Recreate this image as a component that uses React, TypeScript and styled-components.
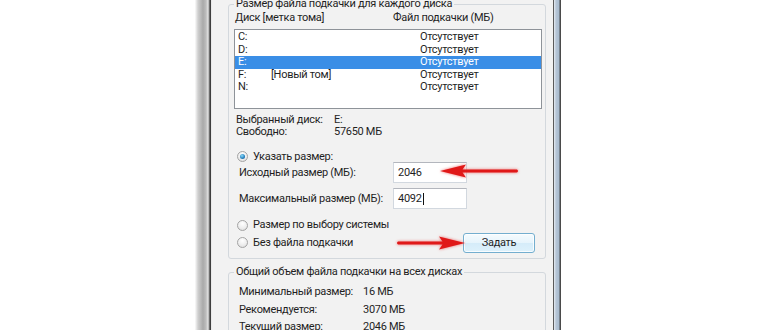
import { Fragment } from "react";
import styled, { createGlobalStyle } from "styled-components";

const GlobalStyle = createGlobalStyle`
  html, body {
    margin: 0;
    padding: 0;
    background: #fff;
  }
  body {
    font-family: Roboto, "Noto Sans", "DejaVu Sans", sans-serif;
    font-size: 11px;
    letter-spacing: -0.3px;
    color: #1f1f1f;
    white-space: nowrap;
  }
`;

const Page = styled.div`
  position: relative;
  width: 770px;
  height: 330px;
  overflow: hidden;
  padding-left: 195px;
  box-sizing: border-box;
`;

const Window = styled.div`
  display: flex;
  width: 366px;
  height: 330px;
`;

const LeftFrame = styled.div`
  width: 17px;
  flex: none;
  background: linear-gradient(
    to right,
    #fbfbfb 0,
    #cfcfcf 3px,
    #a9a9a9 8px,
    #bdbdbd 11px,
    #e2e2e2 13px,
    #9a9a9a 14px,
    #3e3e3e 15px,
    #3e3e3e 16px,
    #e9e9e9 16px
  );
`;

const RightFrame = styled.div`
  width: 8px;
  flex: none;
  background: linear-gradient(
    to right,
    #5a5a5a 0,
    #5a5a5a 1px,
    #e6ecf2 1px,
    #b7c6d6 3px,
    #a9bccf 6px,
    #4a4a4a 7px,
    #4a4a4a 8px
  );
`;

const Client = styled.div`
  flex: 1;
  background: #f2f2f2;
  padding: 0 7px 0 16px;
  display: flex;
  flex-direction: column;
`;

const GroupBox = styled.div<{ $top: number }>`
  margin-top: ${(p) => p.$top}px;
  border: 1px solid #d3d8dd;
  border-radius: 3px;
  padding: 0 3px 5px 5px;
  display: flex;
  flex-direction: column;
`;

const Legend = styled.div`
  align-self: flex-start;
  height: 14px;
  line-height: 14px;
  margin-top: -8px;
  padding: 0 2px;
  background: #f2f2f2;
`;

const ColumnHeader = styled.div`
  display: grid;
  grid-template-columns: 158px 1fr;
  height: 14px;
  line-height: 14px;
  padding-left: 1px;
`;

const DriveList = styled.div`
  margin-top: 4px;
  height: 80px;
  box-sizing: border-box;
  border: 1px solid #8e9399;
  background: #fff;
  padding-top: 1px;
`;

const DriveRow = styled.div<{ $selected?: boolean }>`
  display: grid;
  grid-template-columns: 33px 149px 1fr;
  height: 12.5px;
  line-height: 12.5px;
  padding-left: 3px;
  background: ${(p) => (p.$selected ? "#3a8ee6" : "transparent")};
  color: ${(p) => (p.$selected ? "#fff" : "inherit")};
`;

const InfoGrid = styled.div`
  display: grid;
  grid-template-columns: 98px 1fr;
  margin: 5px 0 0 2px;
  line-height: 12px;
`;

const OptionRow = styled.div<{ $top: number; $height: number }>`
  display: flex;
  align-items: center;
  gap: 5px;
  margin: ${(p) => p.$top}px 0 0 3px;
  height: ${(p) => p.$height}px;
  line-height: 14px;
`;

const Radio = styled.span<{ $checked?: boolean }>`
  position: relative;
  width: 11px;
  height: 11px;
  flex: none;
  box-sizing: border-box;
  border-radius: 50%;
  border: 1px solid #a4a4a4;
  background: radial-gradient(circle at 50% 30%, #ffffff 0, #ececec 60%, #d6d6d6 100%);

  &::after {
    content: "";
    display: ${(p) => (p.$checked ? "block" : "none")};
    position: absolute;
    left: 2px;
    top: 2px;
    width: 5px;
    height: 5px;
    border-radius: 50%;
    background: radial-gradient(circle at 40% 35%, #8fdcf7 0, #2a86c4 55%, #17507e 100%);
  }
`;

const SizeGrid = styled.div`
  display: grid;
  grid-template-columns: 154px 74px;
  row-gap: 5px;
  align-items: center;
  margin: 0 0 0 5px;
`;

const TextBox = styled.div`
  display: flex;
  align-items: center;
  height: 21px;
  box-sizing: border-box;
  border: 1px solid #d2d8df;
  border-top-color: #b3b6bd;
  background: #fff;
  padding-left: 4px;
`;

const Caret = styled.span`
  display: inline-block;
  width: 1px;
  height: 12px;
  margin-left: 1px;
  background: #111;
`;

const Button = styled.div`
  margin-left: auto;
  margin-right: 7px;
  width: 72px;
  height: 20px;
  box-sizing: border-box;
  display: flex;
  align-items: center;
  justify-content: center;
  border: 1px solid #73aecf;
  border-radius: 3px;
  background: linear-gradient(#f5fbfe 0, #e6f4fc 50%, #d5ecf9 51%, #ddf1fc 100%);
  box-shadow: inset 0 0 0 1px rgba(255, 255, 255, 0.8);
`;

const TotalsGrid = styled.div`
  display: grid;
  grid-template-columns: 124px 1fr;
  grid-auto-rows: 17.5px;
  align-items: center;
  margin: 4px 0 0 5px;
`;

const ArrowSvg = styled.svg<{ $x: number; $y: number; $flip?: boolean }>`
  position: absolute;
  left: ${(p) => p.$x}px;
  top: ${(p) => p.$y}px;
  height: 16px;
  transform: ${(p) => (p.$flip ? "scaleX(-1)" : "none")};
  filter: drop-shadow(0 0 1.5px rgba(235, 60, 60, 0.75));
`;

type ArrowProps = { x: number; y: number; length: number; flip?: boolean };

const Arrow = ({ x, y, length, flip }: ArrowProps) => (
  <ArrowSvg $x={x} $y={y} $flip={flip} width={length} viewBox={`0 0 ${length} 16`}>
    <path
      d={`M2 8 L28 1.5 L24.5 6.4 L${length - 3} 6.6 Q${length - 1} 8 ${length - 3} 9.5 L24.5 9.6 L28 14.5 Z`}
      fill="#e01818"
    />
  </ArrowSvg>
);

const drives = [
  { letter: "C:", label: "", size: "Отсутствует" },
  { letter: "D:", label: "", size: "Отсутствует" },
  { letter: "E:", label: "", size: "Отсутствует", selected: true },
  { letter: "F:", label: "[Новый том]", size: "Отсутствует" },
  { letter: "N:", label: "", size: "Отсутствует" },
];

const totals = [
  ["Минимальный размер:", "16 МБ"],
  ["Рекомендуется:", "3070 МБ"],
  ["Текущий размер:", "2046 МБ"],
];

const App = () => {
  return (
    <>
      <GlobalStyle />
      <Page>
        <Window>
          <LeftFrame />
          <Client>
            <GroupBox $top={4}>
              <Legend>Размер файла подкачки для каждого диска</Legend>
              <ColumnHeader>
                <span>Диск [метка тома]</span>
                <span>Файл подкачки (МБ)</span>
              </ColumnHeader>
              <DriveList>
                {drives.map((d) => (
                  <DriveRow key={d.letter} $selected={d.selected}>
                    <span>{d.letter}</span>
                    <span>{d.label}</span>
                    <span>{d.size}</span>
                  </DriveRow>
                ))}
              </DriveList>
              <InfoGrid>
                <span>Выбранный диск:</span>
                <span>E:</span>
                <span>Свободно:</span>
                <span>57650 МБ</span>
              </InfoGrid>
              <OptionRow $top={13} $height={11}>
                <Radio $checked />
                <span>Указать размер:</span>
              </OptionRow>
              <SizeGrid>
                <span>Исходный размер (МБ):</span>
                <TextBox>2046</TextBox>
                <span>Максимальный размер (МБ):</span>
                <TextBox>
                  4092
                  <Caret />
                </TextBox>
              </SizeGrid>
              <OptionRow $top={9} $height={14}>
                <Radio />
                <span>Размер по выбору системы</span>
              </OptionRow>
              <OptionRow $top={0} $height={21}>
                <Radio />
                <span>Без файла подкачки</span>
                <Button>Задать</Button>
              </OptionRow>
            </GroupBox>
            <GroupBox $top={13}>
              <Legend>Общий объем файла подкачки на всех дисках</Legend>
              <TotalsGrid>
                {totals.map(([label, value]) => (
                  <Fragment key={label}>
                    <span>{label}</span>
                    <span>{value}</span>
                  </Fragment>
                ))}
              </TotalsGrid>
            </GroupBox>
          </Client>
          <RightFrame />
        </Window>
        <Arrow x={438} y={163} length={82} />
        <Arrow x={395} y={235} length={72} flip />
      </Page>
    </>
  );
};

export default App;
